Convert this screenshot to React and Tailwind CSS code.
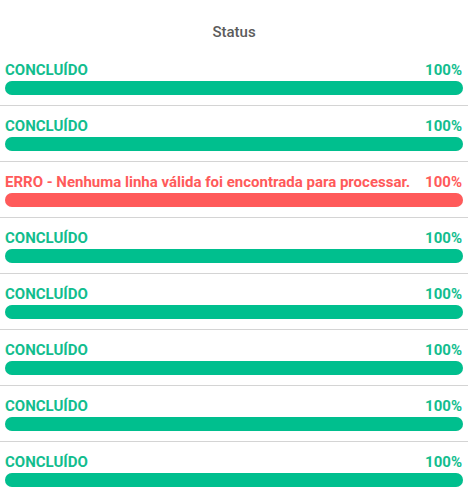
import React from "react";

const ROWS = [
  { status: "ok", label: "CONCLUÍDO", pct: 100 },
  { status: "ok", label: "CONCLUÍDO", pct: 100 },
  { status: "error", label: "ERRO - Nenhuma linha válida foi encontrada para processar.", pct: 100 },
  { status: "ok", label: "CONCLUÍDO", pct: 100 },
  { status: "ok", label: "CONCLUÍDO", pct: 100 },
  { status: "ok", label: "CONCLUÍDO", pct: 100 },
  { status: "ok", label: "CONCLUÍDO", pct: 100 },
  { status: "ok", label: "CONCLUÍDO", pct: 100 },
];

function StatusRow({ status, label, pct }) {
  const isError = status === "error";
  return (
    <div className="border-b border-[#d4d4d4] px-[5px] pt-[12px] pb-[10px]">
      <div
        className={`flex justify-between text-[15px] leading-4 font-bold ${
          isError ? "text-[#ff5a5a]" : "text-[#12bd8e]"
        }`}
      >
        <span>{label}</span>
        <span className="pr-px">{pct}%</span>
      </div>
      <div className="mt-[3px] h-3.5 w-full rounded-full bg-[#e5e5e5]">
        <div
          className={`h-3.5 rounded-full ${isError ? "bg-[#ff5a5a]" : "bg-[#00bf8e]"}`}
          style={{ width: `${pct}%` }}
        />
      </div>
    </div>
  );
}

export default function App() {
  return (
    <div className="w-[468px] bg-white" style={{ fontFamily: "Roboto, 'Liberation Sans', sans-serif" }}>
      <div className="h-[50px] pt-6 text-center text-[15px] leading-4 font-medium text-[#5c5c5c]">
        Status
      </div>
      {ROWS.map((row, i) => (
        <StatusRow key={i} {...row} />
      ))}
    </div>
  );
}
